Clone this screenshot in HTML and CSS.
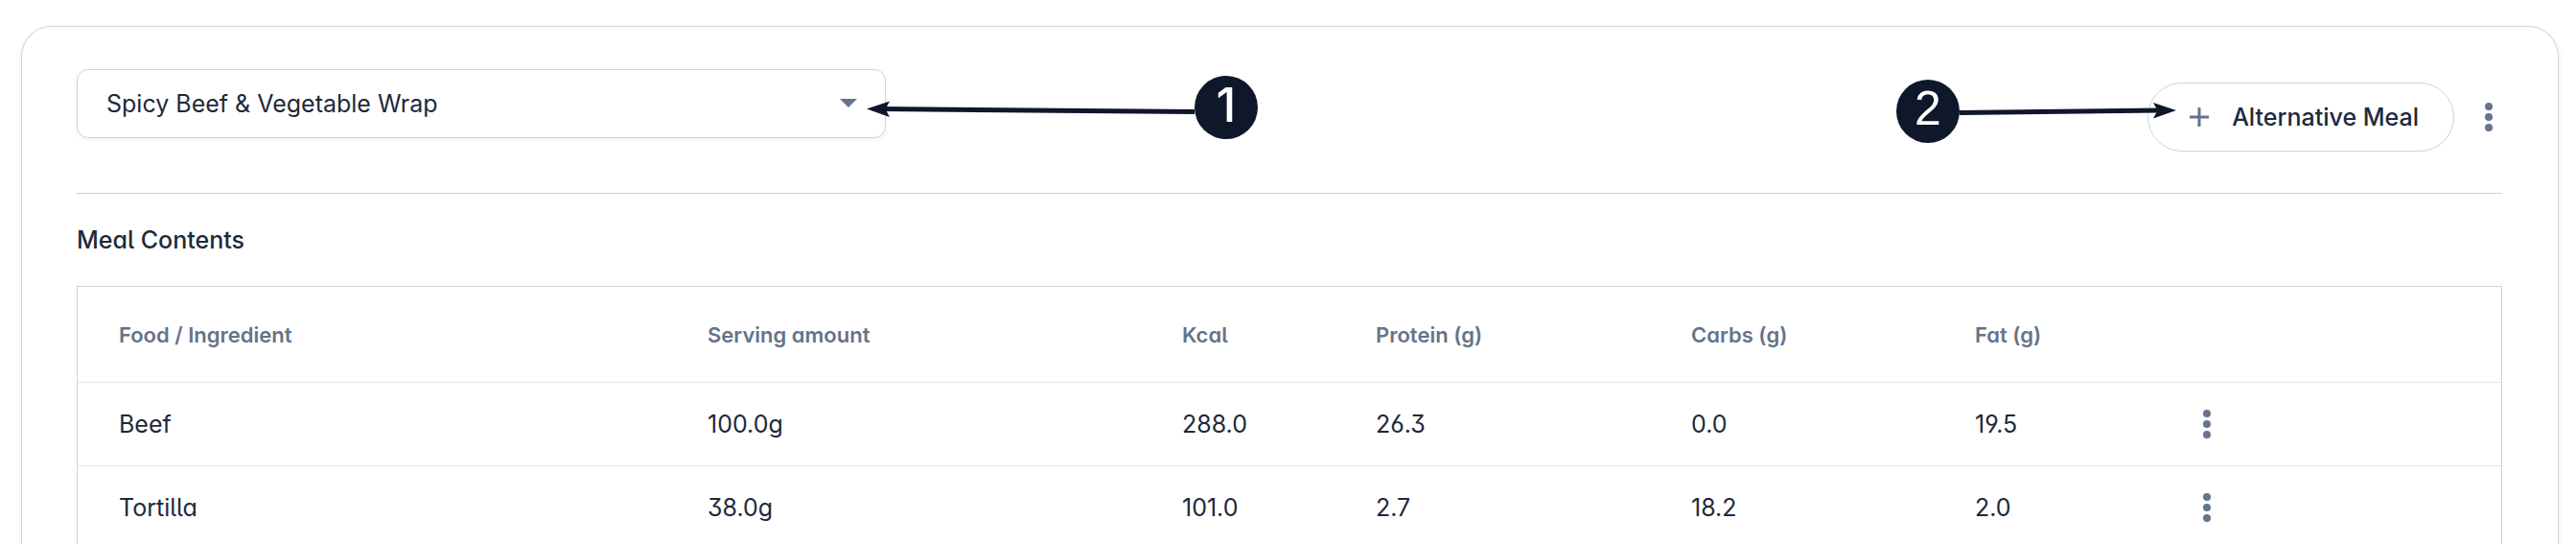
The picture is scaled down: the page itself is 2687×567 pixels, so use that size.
FILE: index.html
```html
<!DOCTYPE html>
<html lang="en">
<head>
<meta charset="utf-8">
<meta name="viewport" content="width=device-width, initial-scale=1">
<title>Meal plan</title>
<link rel="stylesheet" href="styles.css">
</head>
<body>
<main class="card">
  <header class="toolbar">
    <div class="picker">
      <select class="picker-select" aria-label="Meal">
        <option>Spicy Beef &amp; Vegetable Wrap</option>
      </select>
      <svg class="picker-caret" viewBox="0 0 18 9" aria-hidden="true"><path d="M0 0h18l-9 9z"/></svg>
      <div class="callout callout-one">
        <svg class="callout-arrow" viewBox="0 0 342 20" aria-hidden="true"><path class="shaft" d="M16 11.600L342 14.600"/><path class="head" d="M0 11.500L24 3.500 19.500 11.700 24 20z"/></svg>
        <span class="callout-badge">1</span>
      </div>
    </div>
    <div class="actions">
      <button class="add-meal" type="button">
        <svg class="plus" viewBox="0 0 20 20" aria-hidden="true"><path d="M10 1v18M1 10h18"/></svg>
        Alternative Meal
      </button>
      <button class="more" type="button" aria-label="Meal options">
        <svg class="dots" viewBox="0 0 8 30" aria-hidden="true"><circle cx="4" cy="4" r="4"/><circle cx="4" cy="15" r="4"/><circle cx="4" cy="26" r="4"/></svg>
      </button>
      <div class="callout callout-two">
        <span class="callout-badge">2</span>
        <svg class="callout-arrow" viewBox="0 0 226 20" aria-hidden="true"><path class="shaft" d="M0 11.500L210 9"/><path class="head" d="M226 9L202 1 206.500 9.200 202 17.500z"/></svg>
      </div>
    </div>
  </header>
  <h2 class="title">Meal Contents</h2>
  <table class="foods">
    <colgroup><col class="c-food"><col class="c-serving"><col class="c-kcal"><col class="c-protein"><col class="c-carbs"><col class="c-fat"><col></colgroup>
    <thead>
      <tr><th scope="col">Food / Ingredient</th><th scope="col">Serving amount</th><th scope="col">Kcal</th><th scope="col">Protein (g)</th><th scope="col">Carbs (g)</th><th scope="col">Fat (g)</th><td></td></tr>
    </thead>
    <tbody>
      <tr><td>Beef</td><td>100.0g</td><td>288.0</td><td>26.3</td><td>0.0</td><td>19.5</td>
        <td><button class="more" type="button" aria-label="Beef options"><svg class="dots" viewBox="0 0 8 30" aria-hidden="true"><circle cx="4" cy="4" r="4"/><circle cx="4" cy="15" r="4"/><circle cx="4" cy="26" r="4"/></svg></button></td></tr>
      <tr><td>Tortilla</td><td>38.0g</td><td>101.0</td><td>2.7</td><td>18.2</td><td>2.0</td>
        <td><button class="more" type="button" aria-label="Tortilla options"><svg class="dots" viewBox="0 0 8 30" aria-hidden="true"><circle cx="4" cy="4" r="4"/><circle cx="4" cy="15" r="4"/><circle cx="4" cy="26" r="4"/></svg></button></td></tr>
    </tbody>
  </table>
</main>
</body>
</html>
```
FILE: styles.css
```css
* { box-sizing: border-box; }

body {
  margin: 0;
  padding: 27px 18px 0 22px;
  background: #fff;
  color: #1e293b;
  font-family: Inter, "Liberation Sans", sans-serif;
  font-size: 25px;
  line-height: 32px;
}

.card {
  padding: 44px 58px 0 57px;
  border: 1px solid #cbd5e1;
  border-bottom: 0;
  border-radius: 32px 32px 0 0;
  box-shadow: 0 2px 6px rgba(15, 23, 42, 0.08);
}

.toolbar {
  display: flex;
  justify-content: space-between;
  align-items: flex-start;
  padding-bottom: 43px;
  border-bottom: 1px solid #cbd5e1;
}

.picker {
  position: relative;
  flex: 0 1 844px;
}

.picker-select {
  display: block;
  width: 100%;
  height: 72px;
  padding: 0 72px 0 30px;
  border: 1px solid #cbd5e1;
  border-radius: 12px;
  background: #fff;
  box-shadow: 0 2px 4px rgba(15, 23, 42, 0.05);
  color: inherit;
  font: inherit;
  appearance: none;
}

.picker-caret {
  position: absolute;
  top: 31px;
  right: 30px;
  width: 18px;
  height: 9px;
  fill: #64748b;
  pointer-events: none;
}

.actions {
  position: relative;
  display: flex;
  align-items: center;
  gap: 24px;
  padding: 14px 2px 0 0;
}

.add-meal {
  display: flex;
  align-items: center;
  gap: 24px;
  height: 72px;
  padding: 0 36px 0 43px;
  border: 1px solid #cbd5e1;
  border-radius: 36px;
  background: #fff;
  color: inherit;
  font: inherit;
  font-weight: 500;
}

.plus {
  width: 20px;
  height: 20px;
  fill: none;
  stroke: #64748b;
  stroke-width: 3;
  stroke-linecap: round;
}

.more {
  display: flex;
  justify-content: center;
  width: 24px;
  padding: 0;
  border: 0;
  background: none;
}

.dots {
  width: 8px;
  height: 30px;
  fill: #64748b;
}

.callout {
  position: absolute;
  display: flex;
  align-items: center;
  pointer-events: none;
}

.callout-one { top: 7px; left: 824px; }
.callout-two { top: 11px; right: 340px; }

.callout-badge {
  width: 66px;
  height: 66px;
  border-radius: 50%;
  background: #0f172a;
  color: #fff;
  font-family: "Liberation Sans", sans-serif;
  font-size: 50px;
  line-height: 60px;
  text-align: center;
}

.callout-one .callout-badge {
  font-family: Inter, sans-serif;
  font-weight: 500;
}

.callout-arrow {
  height: 20px;
}

.callout-one .callout-arrow { width: 342px; }
.callout-two .callout-arrow { width: 226px; }

.shaft {
  fill: none;
  stroke: #0f172a;
  stroke-width: 5;
}

.head { fill: #0f172a; }

.title {
  margin: 32px 0;
  font-size: 25px;
  font-weight: 500;
  line-height: 32px;
  font-feature-settings: "cv11", "cv05";
}

.foods {
  width: 100%;
  table-layout: fixed;
  border: 1px solid #cbd5e1;
  border-bottom: 0;
  border-spacing: 0;
  border-collapse: separate;
  font-feature-settings: "cv11", "cv05", "cv09", "ss01";
}

.c-food { width: 614px; }
.c-serving { width: 495px; }
.c-kcal { width: 202px; }
.c-protein { width: 329px; }
.c-carbs { width: 296px; }
.c-fat { width: 230px; }

.foods th,
.foods td {
  height: 87px;
  padding: 0 0 0 43px;
  border-bottom: 1px solid #e2e8f0;
  text-align: left;
}

.foods thead th,
.foods thead td {
  height: 100px;
  color: #64748b;
  font-size: 22px;
  font-weight: 600;
}
```
